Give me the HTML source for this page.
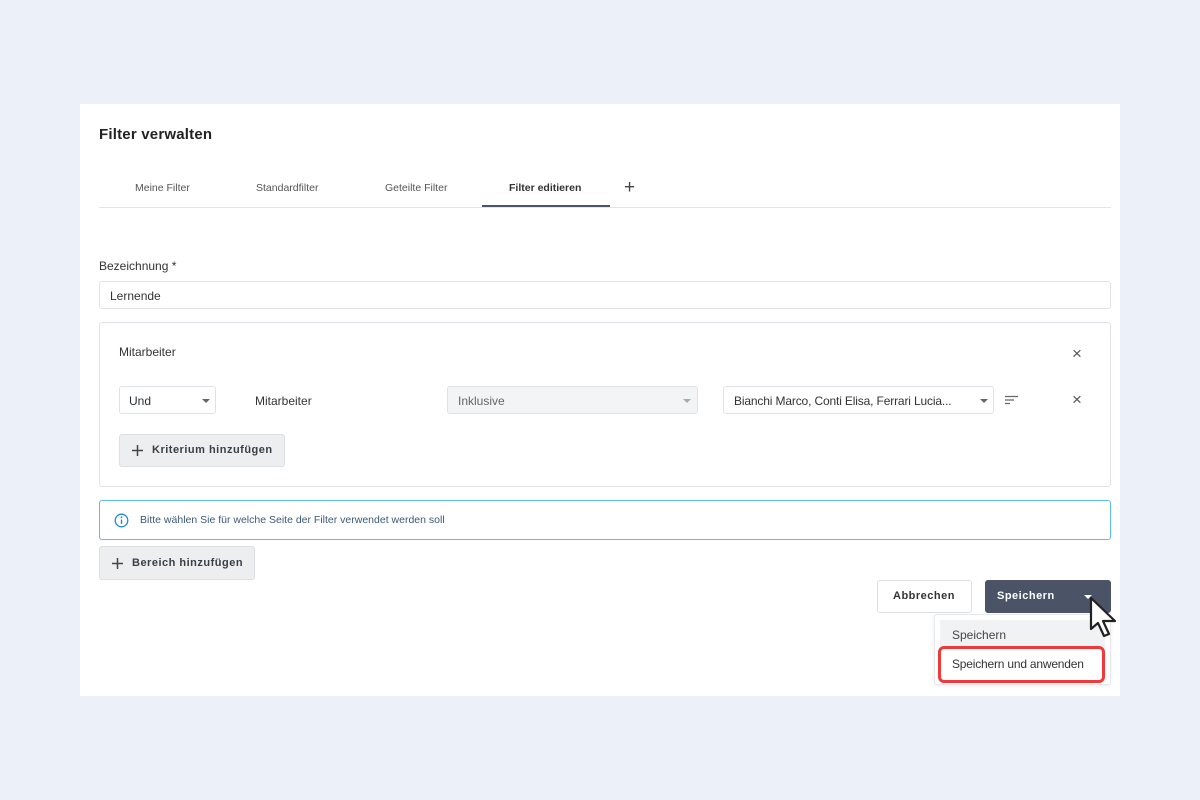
<!DOCTYPE html>
<html><head><meta charset="utf-8"><style>
*{box-sizing:border-box;margin:0;padding:0}
body{width:1200px;height:800px;background:#ecf0f8;font-family:"Liberation Sans",sans-serif;position:relative;overflow:hidden;color:#2b2f36}
.a{position:absolute}
.card{left:80px;top:104px;width:1040px;height:592px;background:#fff}
.t{font-size:10.5px;color:#555;}
.inp{border:1px solid #dfe2e7;border-radius:3px;background:#fff}
.caret{position:absolute;width:0;height:0;border-left:4px solid transparent;border-right:4px solid transparent;border-top:4px solid #666}
.btn{background:#eceef0;border:1px solid #dcdfe3;border-radius:3px}
.bt{font-size:11px;font-weight:bold;letter-spacing:.5px;color:#3a3f47}
</style></head><body>
<div class="a card"></div>
<div class="a" style="left:99px;top:126px;font-size:15px;font-weight:bold;letter-spacing:.2px;color:#222">Filter verwalten</div>
<div class="a t" style="left:135px;top:182px">Meine Filter</div>
<div class="a t" style="left:256px;top:182px">Standardfilter</div>
<div class="a t" style="left:385px;top:182px">Geteilte Filter</div>
<div class="a t" style="left:509px;top:182px;color:#333;font-weight:bold">Filter editieren</div>
<div class="a" style="left:624px;top:177px;font-size:19px;color:#444">+</div>
<div class="a" style="left:99px;top:207px;width:1012px;height:1px;background:#e3e5e8"></div>
<div class="a" style="left:482px;top:205px;width:128px;height:2px;background:#4a5568"></div>
<div class="a" style="left:99px;top:259px;font-size:12px;color:#333">Bezeichnung *</div>
<div class="a inp" style="left:99px;top:281px;width:1012px;height:28px"></div>
<div class="a" style="left:110px;top:289px;font-size:12px;color:#333">Lernende</div>
<div class="a inp" style="left:99px;top:322px;width:1012px;height:165px"></div>
<div class="a" style="left:119px;top:345px;font-size:12px;color:#333">Mitarbeiter</div>
<div class="a" style="left:1072px;top:344px;font-size:17px;color:#555">×</div>
<div class="a inp" style="left:119px;top:386px;width:97px;height:28px"></div>
<div class="a" style="left:129px;top:394px;font-size:12px">Und</div>
<div class="caret" style="left:202px;top:399px"></div>
<div class="a" style="left:255px;top:394px;font-size:12px;color:#333">Mitarbeiter</div>
<div class="a inp" style="left:447px;top:386px;width:251px;height:28px;background:#f3f4f5"></div>
<div class="a" style="left:458px;top:394px;font-size:12px;color:#666">Inklusive</div>
<div class="caret" style="left:683px;top:399px;border-top-color:#aaa"></div>
<div class="a inp" style="left:723px;top:386px;width:271px;height:28px"></div>
<div class="a" style="left:734px;top:394px;font-size:12px;letter-spacing:-.15px;color:#333">Bianchi Marco, Conti Elisa, Ferrari Lucia...</div>
<div class="caret" style="left:980px;top:399px"></div>
<svg class="a" style="left:1005px;top:395px" width="14" height="10"><path d="M0 1.5H13M0 5H9M0 8.5H5" stroke="#666" stroke-width="1.3"/></svg>
<div class="a" style="left:1072px;top:390px;font-size:17px;color:#555">×</div>
<div class="a btn" style="left:119px;top:434px;width:166px;height:33px"></div>
<svg class="a" style="left:132px;top:445px" width="11" height="11"><path d="M5.5 0V11M0 5.5H11" stroke="#444" stroke-width="1.5"/></svg>
<div class="a bt" style="left:152px;top:444px">Kriterium hinzufügen</div>
<div class="a" style="left:99px;top:500px;width:1012px;height:40px;border:1px solid #5ebcf0;border-radius:3px"></div>
<svg class="a" style="left:114px;top:513px" width="15" height="15"><circle cx="7.5" cy="7.5" r="6.3" fill="none" stroke="#1e88d6" stroke-width="1.3"/><path d="M7.5 6.5V11" stroke="#1e88d6" stroke-width="1.4"/><circle cx="7.5" cy="4.3" r=".9" fill="#1e88d6"/></svg>
<div class="a" style="left:140px;top:514px;font-size:10.5px;color:#3a5a78">Bitte wählen Sie für welche Seite der Filter verwendet werden soll</div>
<div class="a btn" style="left:99px;top:546px;width:156px;height:34px"></div>
<svg class="a" style="left:112px;top:558px" width="11" height="11"><path d="M5.5 0V11M0 5.5H11" stroke="#444" stroke-width="1.5"/></svg>
<div class="a bt" style="left:132px;top:557px">Bereich hinzufügen</div>
<div class="a" style="left:877px;top:580px;width:95px;height:33px;border:1px solid #dcdfe3;border-radius:3px;background:#fff"></div>
<div class="a bt" style="left:893px;top:590px;color:#333">Abbrechen</div>
<div class="a" style="left:985px;top:580px;width:126px;height:33px;border-radius:3px;background:#4a5466"></div>
<div class="a bt" style="left:997px;top:590px;color:#fff">Speichern</div>
<div class="caret" style="left:1084px;top:595px;border-top-color:#fff"></div>
<div class="a" style="left:934px;top:614px;width:177px;height:71px;background:#fff;border:1px solid #e6e8eb;border-radius:3px;box-shadow:0 1px 3px rgba(0,0,0,.08)"></div>
<div class="a" style="left:940px;top:620px;width:165px;height:28px;background:#f1f2f4"></div>
<div class="a" style="left:952px;top:628px;font-size:12px;color:#444">Speichern</div>
<div class="a" style="left:938px;top:646px;width:167px;height:37px;border:3px solid #f03a3a;border-radius:6px"></div>
<div class="a" style="left:952px;top:657px;font-size:12px;letter-spacing:-.2px;color:#333">Speichern und anwenden</div>
<svg class="a" style="left:1088px;top:596px" width="34" height="44"><path d="M3 2L3 33L10 27L16 40L21 38L15 25L27 25Z" fill="#fff" stroke="#222" stroke-width="2.2" stroke-linejoin="round"/></svg>
</body></html>
